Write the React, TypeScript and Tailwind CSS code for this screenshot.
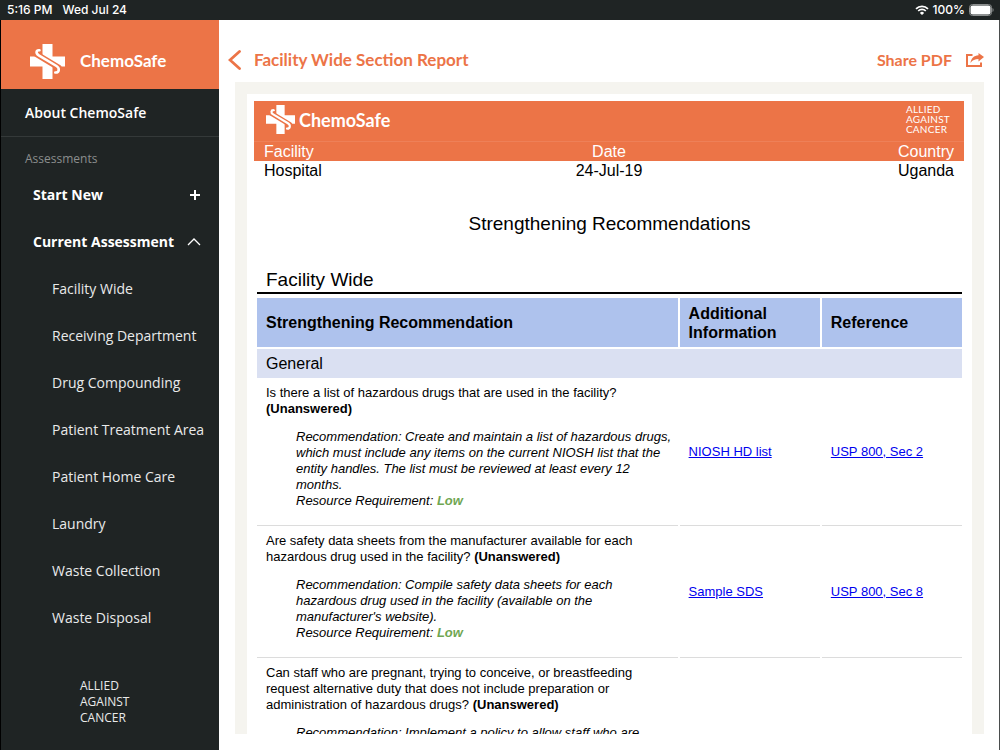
import React from 'react';

interface Recommendation {
  question: string;
  recommendation: string;
  requirement?: string;
  info?: string;
  reference?: string;
}

const SECTIONS = [
  'Facility Wide',
  'Receiving Department',
  'Drug Compounding',
  'Patient Treatment Area',
  'Patient Home Care',
  'Laundry',
  'Waste Collection',
  'Waste Disposal',
];

const ROWS: Recommendation[] = [
  {
    question: 'Is there a list of hazardous drugs that are used in the facility?',
    recommendation:
      'Create and maintain a list of hazardous drugs, which must include any items on the current NIOSH list that the entity handles. The list must be reviewed at least every 12 months.',
    requirement: 'Low',
    info: 'NIOSH HD list',
    reference: 'USP 800, Sec 2',
  },
  {
    question: 'Are safety data sheets from the manufacturer available for each hazardous drug used in the facility?',
    recommendation:
      "Compile safety data sheets for each hazardous drug used in the facility (available on the manufacturer's website).",
    requirement: 'Low',
    info: 'Sample SDS',
    reference: 'USP 800, Sec 8',
  },
  {
    question:
      'Can staff who are pregnant, trying to conceive, or breastfeeding request alternative duty that does not include preparation or administration of hazardous drugs?',
    recommendation: 'Implement a policy to allow staff who are',
  },
];

const LogoMark = ({ className }: { className: string }) => (
  <svg viewBox="0 0 35 35" className={className} aria-hidden="true">
    <path d="M12.500 0h10v12.500H35v10H22.500V35h-10V22.500H0v-10h12.500z" fill="#fff" />
    <path d="M7 10.500 28.500 23.500" fill="none" stroke="#ec7447" strokeWidth="6" strokeLinecap="round" />
    <path
      d="M9.500 6.300C6 5.800 5.500 9.400 8.700 11.300L26.500 22c3.500 2.200 2.800 6.800-1.200 6.500"
      fill="none"
      stroke="#fff"
      strokeWidth="2.600"
      strokeLinecap="round"
    />
  </svg>
);

const StatusBar = () => (
  <header className="flex h-5 shrink-0 items-center justify-between bg-[#1f2424] pr-[6px] pl-[7px] font-['Inter'] text-xs font-medium text-white">
    <div className="flex gap-[10px]">
      <span>5:16 PM</span>
      <span>Wed Jul 24</span>
    </div>
    <div className="flex items-center gap-1">
      <svg viewBox="0 0 14 10" className="h-[10px] w-[14px]" aria-hidden="true">
        <path d="M1 3.800a8.500 8.500 0 0 1 12 0M3.200 6a5.400 5.400 0 0 1 7.600 0" fill="none" stroke="#fff" strokeWidth="1.700" />
        <path d="M7 10 4.900 7.900a3 3 0 0 1 4.200 0z" fill="#fff" />
      </svg>
      <span>100%</span>
      <svg viewBox="0 0 25 12" className="h-3 w-[25px]" aria-hidden="true">
        <rect x="0.500" y="0.500" width="22" height="11" rx="3" fill="none" stroke="#8b8e8e" />
        <rect x="1.500" y="1.500" width="20" height="9" rx="2" fill="#fff" />
        <path d="M23.500 4v4c1.500-.5 1.500-3.500 0-4z" fill="#8b8e8e" />
      </svg>
    </div>
  </header>
);

const Sidebar = () => (
  <aside className="flex w-[219px] shrink-0 flex-col border-l border-black bg-[#1f2424] font-['Open_Sans'] text-sm text-[#e9eaea]">
    <div className="flex h-[69px] shrink-0 items-center gap-[15px] bg-[#ec7447] pt-[13px] pl-[29px]">
      <LogoMark className="h-[35px] w-[35px]" />
      <span className="font-['Lato'] text-[17px] font-bold text-white">ChemoSafe</span>
    </div>
    <a href="#about" className="flex h-12 shrink-0 items-center border-b border-[#343939] pl-6 font-semibold text-white">
      About ChemoSafe
    </a>
    <nav className="flex flex-1 flex-col pt-3">
      <h2 className="pl-6 text-xs leading-5 font-medium text-[#8b8e8e]">Assessments</h2>
      <button type="button" className="mt-[2px] flex h-[47px] items-center justify-between pr-[18px] pl-8 font-bold text-white">
        Start New
        <svg viewBox="0 0 12 12" className="h-3 w-3" aria-hidden="true">
          <path d="M6 1v10M1 6h10" stroke="#fff" strokeWidth="2" />
        </svg>
      </button>
      <button type="button" aria-expanded="true" className="flex h-[47px] items-center justify-between pr-[18px] pl-8 font-bold text-white">
        Current Assessment
        <svg viewBox="0 0 14 8" className="h-2 w-[14px]" aria-hidden="true">
          <path d="m1 7 6-6 6 6" fill="none" stroke="#fff" strokeWidth="1.300" />
        </svg>
      </button>
      {SECTIONS.map((s) => (
        <a key={s} href="#section" className="flex h-[47px] items-center pl-[51px]">
          {s}
        </a>
      ))}
    </nav>
    <p className="pb-6 pl-[79px] text-xs leading-4">
      ALLIED
      <br />
      AGAINST
      <br />
      CANCER
    </p>
  </aside>
);

const ReportHeader = () => (
  <div className="-mr-[2px] -ml-[3px]">
    <div className="flex h-[41px] items-start justify-between border-b border-[#ee8058] bg-[#ec7447] pr-[14px] pl-3 text-white">
      <div className="flex items-center gap-1 pt-1">
        <LogoMark className="h-[29px] w-[29px]" />
        <span className="font-['Lato'] text-lg leading-none font-bold">ChemoSafe</span>
      </div>
      <p className="pt-[3px] font-['Lato'] text-[10px] leading-[10px] tracking-wide">
        ALLIED
        <br />
        AGAINST
        <br />
        CANCER
      </p>
    </div>
    <table className="w-full table-fixed text-base leading-[19px]">
      <thead className="bg-[#ec7447] text-white">
        <tr>
          <th className="pl-[10px] text-left font-normal">Facility</th>
          <th className="font-normal">Date</th>
          <th className="pr-[10px] text-right font-normal">Country</th>
        </tr>
      </thead>
      <tbody>
        <tr>
          <td className="pl-[10px]">Hospital</td>
          <td className="text-center">24-Jul-19</td>
          <td className="pr-[10px] text-right">Uganda</td>
        </tr>
      </tbody>
    </table>
  </div>
);

const ReportTable = () => (
  <table className="-mx-[2px] w-[calc(100%+4px)] table-fixed border-separate border-spacing-x-[2px] border-spacing-y-0 text-[13px] leading-4">
    <colgroup>
      <col className="w-[60%]" />
      <col className="w-[20%]" />
      <col className="w-[20%]" />
    </colgroup>
    <thead>
      <tr className="text-left text-base leading-[19px]">
        <th className="h-[51px] border-b-2 border-white bg-[#aec2ed] px-[9px] py-0">Strengthening Recommendation</th>
        <th className="border-b-2 border-white bg-[#aec2ed] px-[9px] py-0">Additional Information</th>
        <th className="border-b-2 border-white bg-[#aec2ed] px-[9px] py-0">Reference</th>
      </tr>
    </thead>
    <tbody>
      <tr>
        <th colSpan={3} className="h-[29px] bg-[#dae0f2] px-[9px] py-0 text-left text-base leading-5 font-normal">
          General
        </th>
      </tr>
      {ROWS.map((r) => (
        <tr key={r.question}>
          <td className="border-b border-[#dcdcdc] pt-[7px] pr-1 pb-4 pl-[9px]">
            <p>
              {r.question} <b>(Unanswered)</b>
            </p>
            <p className="mt-3 pl-[30px] italic">{`Recommendation: ${r.recommendation}`}</p>
            {r.requirement && (
              <p className="pl-[30px] italic">
                Resource Requirement: <b className="text-[#6fa652]">{r.requirement}</b>
              </p>
            )}
          </td>
          <td className="border-b border-[#dcdcdc] px-[9px]">
            {r.info && <a href="#info" className="text-[#0000ee] underline">{r.info}</a>}
          </td>
          <td className="border-b border-[#dcdcdc] px-[9px]">
            {r.reference && <a href="#reference" className="text-[#0000ee] underline">{r.reference}</a>}
          </td>
        </tr>
      ))}
    </tbody>
  </table>
);

export default function App() {
  return (
    <div className="flex h-screen flex-col overflow-hidden bg-white">
      <StatusBar />
      <div className="flex min-h-0 flex-1">
        <Sidebar />
        <main className="flex min-w-0 flex-1 flex-col border-r border-[#4a4d4d] pb-4">
          <div className="flex h-[62px] shrink-0 items-center justify-between pt-[18px] pr-[15px] pl-[9px] font-['Lato'] font-bold text-[#ec7447]">
            <div className="flex items-center gap-[13px]">
              <button type="button" aria-label="Back">
                <svg viewBox="0 0 13 20" className="h-5 w-[13px]" aria-hidden="true">
                  <path d="M11.500 1.500 2 10l9.500 8.500" fill="none" stroke="#ec7447" strokeWidth="2.800" strokeLinecap="round" />
                </svg>
              </button>
              <h1 className="text-[17px]">Facility Wide Section Report</h1>
            </div>
            <button type="button" className="flex items-center gap-[14px] text-base">
              Share PDF
              <svg viewBox="0 0 18 14" className="h-[14px] w-[18px]" aria-hidden="true">
                <path d="M6.500 2H1v11h14V9.500" fill="none" stroke="#ec7447" strokeWidth="2" />
                <path d="M12.500 0 18 4l-5.500 4.500V6C9 6 6.500 7 4.500 10 5 5.500 8 2.500 12.500 2.300z" fill="#ec7447" />
              </svg>
            </button>
          </div>
          <section className="mr-[15px] ml-4 min-h-0 flex-1 overflow-hidden bg-[#f5f4ef] px-3 pt-3">
            <article className="min-h-full bg-white px-[10px] pt-[7px] font-['Liberation_Sans'] text-black">
              <ReportHeader />
              <h2 className="mt-8 text-center text-[19px] leading-6">Strengthening Recommendations</h2>
              <h3 className="mt-8 mb-1 border-b-2 border-black px-[9px] text-[19px] leading-6">Facility Wide</h3>
              <ReportTable />
            </article>
          </section>
        </main>
      </div>
    </div>
  );
}
